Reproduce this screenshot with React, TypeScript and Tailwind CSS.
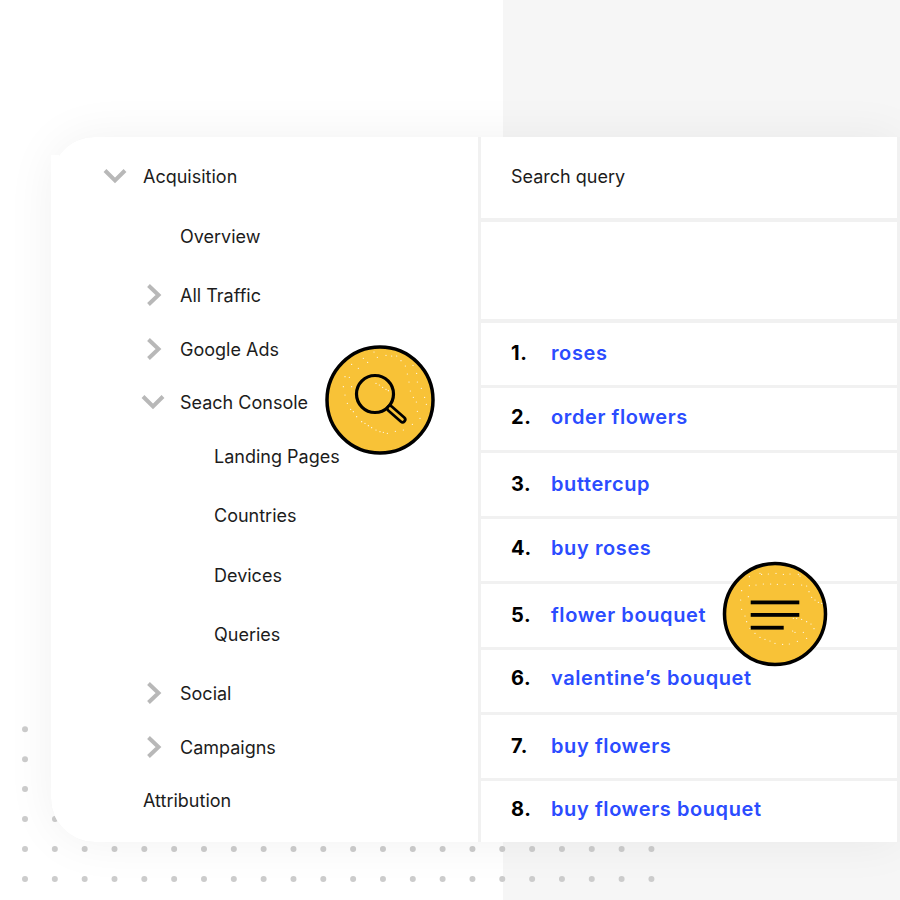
import React from 'react';

const font = "font-['Inter','Liberation_Sans',sans-serif]";

const navItems = [
  { label: 'Acquisition', icon: 'down', rowClass: 'mt-0 pl-[92px]', iconClass: 'left-[52px]' },
  { label: 'Overview', icon: null, rowClass: 'mt-[30px] pl-[129px]', iconClass: '' },
  { label: 'All Traffic', icon: 'right', rowClass: 'mt-[29px] pl-[129px]', iconClass: 'left-[95px]' },
  { label: 'Google Ads', icon: 'right', rowClass: 'mt-[24px] pl-[129px]', iconClass: 'left-[95px]' },
  { label: 'Seach Console', icon: 'down', rowClass: 'mt-[23px] pl-[129px]', iconClass: 'left-[90px]' },
  { label: 'Landing Pages', icon: null, rowClass: 'mt-[24px] pl-[163px]', iconClass: '' },
  { label: 'Countries', icon: null, rowClass: 'mt-[29px] pl-[163px]', iconClass: '' },
  { label: 'Devices', icon: null, rowClass: 'mt-[30px] pl-[163px]', iconClass: '' },
  { label: 'Queries', icon: null, rowClass: 'mt-[29px] pl-[163px]', iconClass: '' },
  { label: 'Social', icon: 'right', rowClass: 'mt-[29px] pl-[129px]', iconClass: 'left-[95px]' },
  { label: 'Campaigns', icon: 'right', rowClass: 'mt-[24px] pl-[129px]', iconClass: 'left-[95px]' },
  { label: 'Attribution', icon: null, rowClass: 'mt-[23px] pl-[92px]', iconClass: '' },
];

const queries = [
  { n: '1.', q: 'roses', cls: 'h-[62px] pb-[2px]' },
  { n: '2.', q: 'order flowers', cls: 'h-[62px] pb-[4px]' },
  { n: '3.', q: 'buttercup', cls: 'h-[63px] pb-[2px]' },
  { n: '4.', q: 'buy roses', cls: 'h-[62px] pb-[4px]' },
  { n: '5.', q: 'flower bouquet', cls: 'h-[63px] pb-[2px]' },
  { n: '6.', q: 'valentine’s bouquet', cls: 'h-[62px] pb-[6px]' },
  { n: '7.', q: 'buy flowers', cls: 'h-[63px] pb-[2px]' },
  { n: '8.', q: 'buy flowers bouquet', cls: 'h-[61px] pb-[6px]' },
];

// dot grid behind the card, bottom left
const dots: [number, number][] = [];
[729.3, 759.3, 789, 819].forEach(y => dots.push([25, y]));
dots.push([55, 819]);
[849, 879].forEach(y => {
  for (let i = 0; i < 22; i++) dots.push([25 + i * 29.83, y]);
});

// speckle positions read off the reference
const searchSpeckle = [
  [155, 103], [175, 115], [190, 85], [203, 97], [222, 66], [232, 82], [258, 76], [275, 78], [290, 78], [303, 92],
  [316, 108], [322, 132], [339, 106], [350, 130], [327, 156], [352, 156], [331, 183], [364, 175], [340, 202], [374, 202],
  [349, 216], [379, 223], [352, 244], [360, 265], [337, 283], [310, 300], [286, 304], [262, 310], [250, 307], [240, 305],
  [228, 300], [215, 293], [205, 287], [195, 280], [185, 275], [170, 260], [160, 245], [152, 238], [142, 220], [135, 195],
  [130, 170], [135, 140], [148, 142], [155, 170], [228, 160], [238, 165], [248, 172], [258, 178], [265, 182],
].map(([x, y]) => [x / 3 - 25, y / 3 - 15]);

const menuSpeckle = [
  [148, 80], [180, 70], [185, 73], [205, 72], [228, 70], [250, 73], [270, 72], [295, 73], [300, 78], [125, 122],
  [148, 107], [168, 105], [190, 102], [212, 102], [232, 103], [255, 103], [280, 103], [305, 105], [320, 108], [327, 125],
  [335, 142], [345, 150], [355, 157], [365, 160], [122, 150], [145, 140], [125, 178], [135, 198], [140, 215], [150, 235],
  [165, 250], [180, 262], [195, 268], [210, 273], [225, 280], [248, 283], [268, 282], [292, 274], [320, 265], [310, 247],
  [342, 236], [333, 222], [320, 215], [305, 208], [290, 205], [280, 205], [278, 243], [285, 247],
].map(([x, y]) => [x / 3 - 22, y / 3 - 11]);

const Speckle = ({ points }: { points: number[][] }) => (
  <>
    {points.map(([x, y], i) => (
      <circle key={i} cx={x} cy={y} r={0.6} fill="#fff" />
    ))}
  </>
);

const SearchBadge = () => (
  <div className="absolute left-[325px] top-[345px] w-[110px] h-[110px]">
    <svg width="110" height="110" viewBox="0 0 110 110">
      <circle cx="55" cy="55" r="53" fill="#f8c237" stroke="#000" strokeWidth="3.5" />
      <Speckle points={searchSpeckle} />
      <circle cx="50" cy="49" r="18.5" fill="none" stroke="#000" strokeWidth="3.2" />
      <path d="M65 63.5 L77.5 74.5" fill="none" stroke="#000" strokeWidth="8" strokeLinecap="round" />
      <path d="M65 63.5 L77.5 74.5" fill="none" stroke="#f8c237" strokeWidth="2.6" strokeLinecap="round" />
    </svg>
  </div>
);

const MenuBadge = () => (
  <div className="absolute left-[722px] top-[561px] w-[106px] h-[106px]">
    <svg width="106" height="106" viewBox="0 0 106 106">
      <circle cx="53" cy="53" r="50.5" fill="#f8c237" stroke="#000" strokeWidth="3.5" />
      <Speckle points={menuSpeckle} />
      <rect x="28.7" y="39.5" width="48.6" height="3.8" fill="#000" />
      <rect x="28.7" y="52" width="48.6" height="3.8" fill="#000" />
      <rect x="28.7" y="64.8" width="33" height="3.8" fill="#000" />
    </svg>
  </div>
);

const ArrowDown = ({ className }: { className: string }) => (
  <svg className={className} width="24" height="16" viewBox="0 0 24 16" fill="none">
    <path d="M2 2.5 L12 12.5 L22 2.5" stroke="#b8b8b8" strokeWidth="4" />
  </svg>
);

const ArrowRight = ({ className }: { className: string }) => (
  <svg className={className} width="16" height="22" viewBox="0 0 16 22" fill="none">
    <path d="M2.5 1.5 L12.5 11 L2.5 20.5" stroke="#b8b8b8" strokeWidth="4" />
  </svg>
);

export default function App() {
  return (
    <div className={`relative w-[900px] h-[900px] overflow-hidden bg-white ${font}`}>
      <div className="absolute left-[503px] top-0 w-[397px] h-full bg-[#f6f6f6]" />
      <svg className="absolute left-0 top-0" width="900" height="900">
        {dots.map(([x, y], i) => (
          <circle key={i} cx={x} cy={y} r={3} fill="#cccccc" />
        ))}
      </svg>

      <div className="relative pt-[137px] pl-[51px]">
        <div className="flex w-[849px] h-[705px] rounded-l-[44px] bg-[#f1f1f1] shadow-[0_0_50px_rgba(0,0,0,0.06)]">
          <div className="relative w-[427px] shrink-0 rounded-l-[44px] bg-white pt-[25px] text-[18px] leading-[30px] text-[#1c1c1c]">
            {/* small step in the top corner */}
            <div className="absolute left-0 top-[18px] w-[8px] h-[26px] bg-white" />
            {navItems.map(item => (
              <div key={item.label} className={`relative h-[30px] flex items-center ${item.rowClass}`}>
                {item.icon === 'down' && <ArrowDown className={`absolute ${item.iconClass} top-[6px]`} />}
                {item.icon === 'right' && <ArrowRight className={`absolute ${item.iconClass} top-[3px]`} />}
                {item.label}
              </div>
            ))}
          </div>
          <div className="ml-[3px] mr-[3px] flex-1 flex flex-col gap-[3px]">
            <div className="h-[81px] mb-[1px] pb-[2px] flex items-center pl-[30px] bg-white text-[18px] text-[#1c1c1c]">Search query</div>
            <div className="h-[97px] mb-[1px] bg-white" />
            {queries.map(row => (
              <div key={row.n} className={`${row.cls} flex items-center pl-[30px] bg-white text-[20px] font-semibold tracking-[0.6px]`}>
                <span className="w-[40px] font-bold text-black">{row.n}</span>
                <span className="text-[#2b4cff]">{row.q}</span>
              </div>
            ))}
          </div>
        </div>
      </div>

      <SearchBadge />
      <MenuBadge />
    </div>
  );
}
